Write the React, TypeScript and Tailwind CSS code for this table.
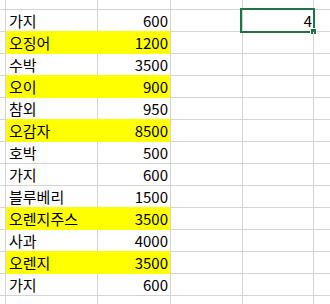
import clsx from "clsx";

type Row = { name: string; qty: number; hl?: boolean };

const rows: Row[] = [
  { name: "가지", qty: 600 },
  { name: "오징어", qty: 1200, hl: true },
  { name: "수박", qty: 3500 },
  { name: "오이", qty: 900, hl: true },
  { name: "참외", qty: 950 },
  { name: "오감자", qty: 8500, hl: true },
  { name: "호박", qty: 500 },
  { name: "가지", qty: 600 },
  { name: "블루베리", qty: 1500 },
  { name: "오렌지주스", qty: 3500, hl: true },
  { name: "사과", qty: 4000 },
  { name: "오렌지", qty: 3500, hl: true },
  { name: "가지", qty: 600 },
];

const line = "border-b border-r border-[#d4d4d4]";
const fill = "bg-[#ffff00] border-b-[#ffff00] shadow-[0_-1px_0_#ffff00]";

function EdgeRow({ h }: { h: string }) {
  return (
    <div className={clsx("flex", h)}>
      <div className={clsx("w-[6px]", line)} />
      <div className={clsx("w-[92px]", line)} />
      <div className={clsx("w-[73px]", line)} />
      <div className={clsx("w-[72px]", line)} />
      <div className={clsx("w-[71px]", line)} />
      <div className="flex-1 border-b border-[#d4d4d4]" />
    </div>
  );
}

export default function App() {
  return (
    <div
      className="w-[330px] h-[304px] overflow-hidden bg-white text-black text-[15px] leading-none"
      style={{ fontFamily: '"Noto Sans CJK KR", "Noto Sans", sans-serif' }}
    >
      <EdgeRow h="h-[10px]" />
      {rows.map((r, i) => (
        <div key={i} className="flex h-[22px]">
          <div className={clsx("w-[6px]", line)} />
          <div
            className={clsx(
              "w-[92px] flex items-center pl-[3px] whitespace-nowrap",
              line,
              r.hl && fill,
              r.hl && "border-r-[#ffff00]"
            )}
          >
            {r.name}
          </div>
          <div
            className={clsx(
              "w-[73px] flex items-center justify-end pr-[2px]",
              line,
              r.hl && fill
            )}
          >
            {r.qty}
          </div>
          <div className={clsx("w-[72px]", line)} />
          <div
            className={clsx(
              "relative w-[71px] flex items-center justify-end pr-[1px]",
              line
            )}
          >
            {i === 0 && (
              <>
                4
                <div className="absolute left-[-3px] top-[-2px] w-[75px] h-[25px] border-2 border-[#217346]" />
                <div className="absolute left-[67px] top-[18px] w-[7px] h-[7px] bg-[#217346] border border-white" />
              </>
            )}
          </div>
          <div className="flex-1 border-b border-[#d4d4d4]" />
        </div>
      ))}
      <EdgeRow h="h-[10px]" />
    </div>
  );
}
